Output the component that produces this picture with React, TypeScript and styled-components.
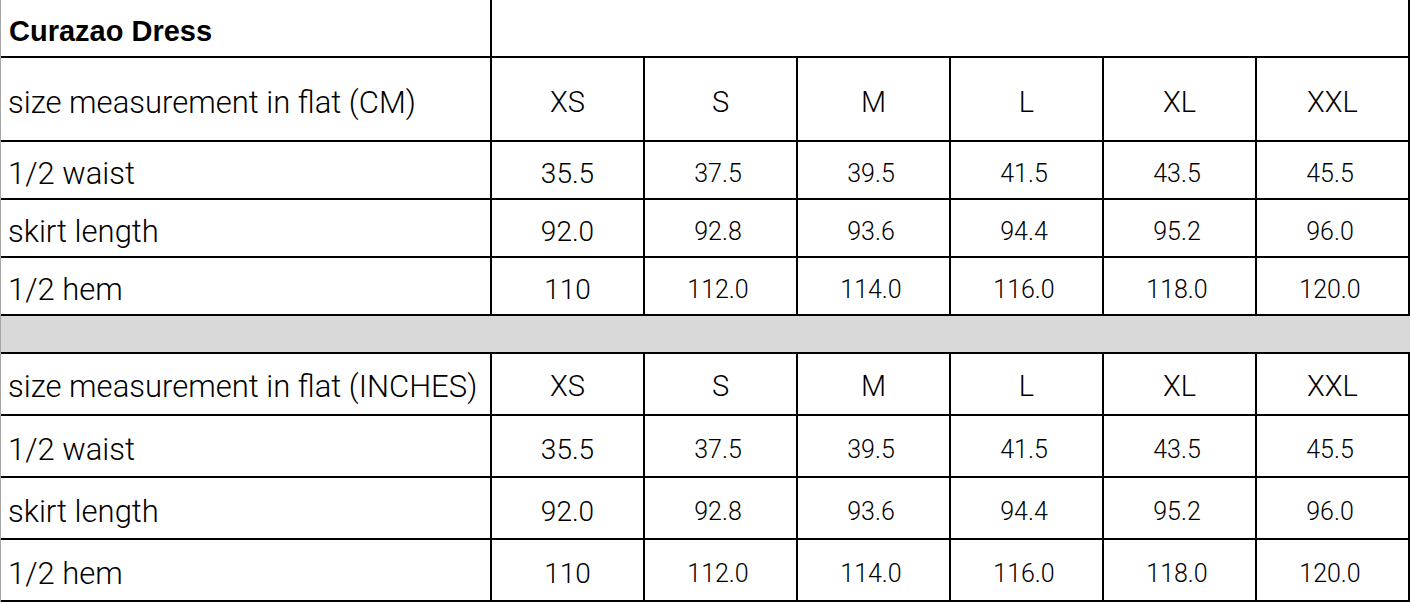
import React from "react";
import styled, { createGlobalStyle } from "styled-components";

const GlobalStyle = createGlobalStyle`
  html, body { margin: 0; padding: 0; background: #ffffff; }
  body { font-family: Roboto, "Liberation Sans", Arial, sans-serif; font-weight: 300; color: #000; }
`;

const Sheet = styled.div`
  display: grid;
  grid-template-columns: 489px repeat(6, 151px);
  grid-template-rows: 56px 82px 56px 56px 56px 36px 60px 60px 60px 60px;
  gap: 2px;
  width: max-content;
  background: #000;
  border-left: 1px solid #a6a6a6;
  padding: 0 2px 2px 0;
`;

const Cell = styled.div<{ $shift?: number }>`
  background: #fff;
  display: flex;
  align-items: center;
  padding-top: ${(p) => p.$shift ?? 8}px;
  box-sizing: border-box;
  white-space: nowrap;
  line-height: 1.15;
`;

const TitleCell = styled(Cell)`
  font-family: "Liberation Sans", Arial, sans-serif;
  font-weight: 700;
  font-size: 29px;
  padding-left: 8px;
`;

const BlankCell = styled(Cell)`
  grid-column: 2 / -1;
`;

const LabelCell = styled(Cell)`
  font-size: 31px;
  padding-left: 7px;
`;

const SizeCell = styled(Cell)`
  font-size: 29px;
  justify-content: center;
`;

const ValueCell = styled(Cell)<{ $lead?: boolean }>`
  font-size: ${(p) => (p.$lead ? 28 : 25)}px;
  justify-content: center;
  padding-right: ${(p) => (p.$lead ? 0 : 5)}px;
`;

const Spacer = styled.div`
  grid-column: 1 / -1;
  background: #d9d9d9;
  margin-right: -2px;
`;

const sizes = ["XS", "S", "M", "L", "XL", "XXL"];

const rows: { label: string; values: string[] }[] = [
  { label: "1/2 waist", values: ["35.5", "37.5", "39.5", "41.5", "43.5", "45.5"] },
  { label: "skirt length", values: ["92.0", "92.8", "93.6", "94.4", "95.2", "96.0"] },
  { label: "1/2 hem", values: ["110", "112.0", "114.0", "116.0", "118.0", "120.0"] },
];

const Block: React.FC<{ unit: string; headShift: number; rowShift: number }> = ({
  unit,
  headShift,
  rowShift,
}) => (
  <>
    <LabelCell $shift={headShift}>size measurement in flat ({unit})</LabelCell>
    {sizes.map((s) => (
      <SizeCell key={s} $shift={headShift}>
        {s}
      </SizeCell>
    ))}
    {rows.map((r) => (
      <React.Fragment key={r.label}>
        <LabelCell $shift={rowShift}>{r.label}</LabelCell>
        {r.values.map((v, i) => (
          <ValueCell key={i} $lead={i === 0} $shift={rowShift}>
            {v}
          </ValueCell>
        ))}
      </React.Fragment>
    ))}
  </>
);

export default function App() {
  return (
    <>
      <GlobalStyle />
      <Sheet>
        <TitleCell $shift={8}>Curazao Dress</TitleCell>
        <BlankCell />
        <Block unit="CM" headShift={7} rowShift={8} />
        <Spacer />
        <Block unit="INCHES" headShift={6} rowShift={8} />
      </Sheet>
    </>
  );
}
